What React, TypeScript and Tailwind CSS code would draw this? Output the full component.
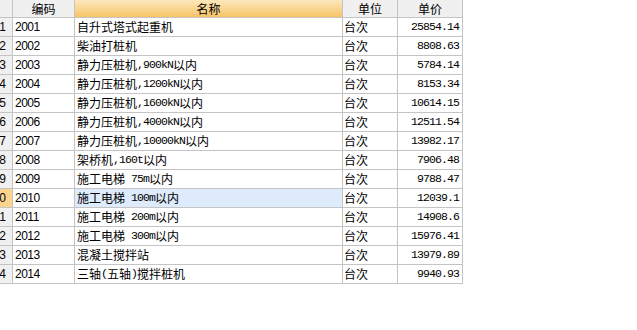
import React from 'react';

const ROWS: [string, string, string][] = [
  ['2001', '自升式塔式起重机', '25854.14'],
  ['2002', '柴油打桩机', '8808.63'],
  ['2003', '静力压桩机,900kN以内', '5784.14'],
  ['2004', '静力压桩机,1200kN以内', '8153.34'],
  ['2005', '静力压桩机,1600kN以内', '10614.15'],
  ['2006', '静力压桩机,4000kN以内', '12511.54'],
  ['2007', '静力压桩机,10000kN以内', '13982.17'],
  ['2008', '架桥机,160t以内', '7906.48'],
  ['2009', '施工电梯 75m以内', '9788.47'],
  ['2010', '施工电梯 100m以内', '12039.1'],
  ['2011', '施工电梯 200m以内', '14908.6'],
  ['2012', '施工电梯 300m以内', '15976.41'],
  ['2013', '混凝土搅拌站', '13979.89'],
  ['2014', '三轴(五轴)搅拌桩机', '9940.93'],
];

const SELECTED = 9;

// half-width latin runs in a narrow mono face, CJK at full 12px
function Mixed({ text }: { text: string }) {
  const parts = text.split(/([\x20-\x7e]+)/).filter(Boolean);
  return (
    <>
      {parts.map((p, i) =>
        /^[\x20-\x7e]+$/.test(p) ? (
          <span key={i} className="font-['Liberation_Mono',monospace] text-[11.5px] tracking-[-0.9px] whitespace-pre">
            {p}
          </span>
        ) : (
          <span key={i}>{p}</span>
        )
      )}
    </>
  );
}

export default function App() {
  return (
    <div className="w-[637px] h-[330px] bg-white overflow-hidden font-['Noto_Sans_CJK_SC',sans-serif] text-[12px] text-black leading-none">
      <div className="grid grid-cols-[13px_62px_268px_55px_65px] w-[463px]">
        {/* header */}
        <div className="h-[18px] bg-[#f0f0f0] border-r border-b border-[#c4c4c4]" />
        <div className="h-[18px] bg-[#f0f0f0] border-r border-b border-[#c4c4c4] flex items-center justify-center">编码</div>
        <div className="h-[18px] bg-gradient-to-b from-[#fde7bb] to-[#f6c466] border-r border-b border-[#c4c4c4] flex items-center justify-center">名称</div>
        <div className="h-[18px] bg-[#f0f0f0] border-r border-b border-[#c4c4c4] flex items-center justify-center">单位</div>
        <div className="h-[18px] bg-[#f0f0f0] border-r border-b border-[#c4c4c4] flex items-center justify-center">单价</div>

        {ROWS.map(([code, name, price], i) => {
          const sel = i === SELECTED;
          return (
            <React.Fragment key={code}>
              {/* row header is scrolled: only the last digit peeks out */}
              <div
                className={`h-[19px] border-r border-b border-[#c4c4c4] overflow-hidden flex items-center justify-end pr-[6px] font-['Liberation_Sans',sans-serif] ${
                  sel ? 'bg-[#fcd48e]' : 'bg-[#f0f0f0]'
                }`}
              >
                <span className="whitespace-nowrap">{i + 1}</span>
              </div>
              <div className="h-[19px] border-r border-b border-[#c4c4c4] flex items-center pl-[2px] font-['Liberation_Sans',sans-serif] tracking-[-0.5px]">
                {code}
              </div>
              <div
                className={`h-[19px] border-r border-b border-[#c4c4c4] flex items-center pl-[2px] whitespace-nowrap overflow-hidden ${
                  sel ? 'bg-[#ddebfc]' : ''
                }`}
              >
                <Mixed text={name} />
              </div>
              <div className="h-[19px] border-r border-b border-[#c4c4c4] flex items-center pl-[1px]">台次</div>
              <div className="h-[19px] border-r border-b border-[#c4c4c4] flex items-center justify-end pr-[3px]">
                <Mixed text={price} />
              </div>
            </React.Fragment>
          );
        })}
      </div>
    </div>
  );
}
